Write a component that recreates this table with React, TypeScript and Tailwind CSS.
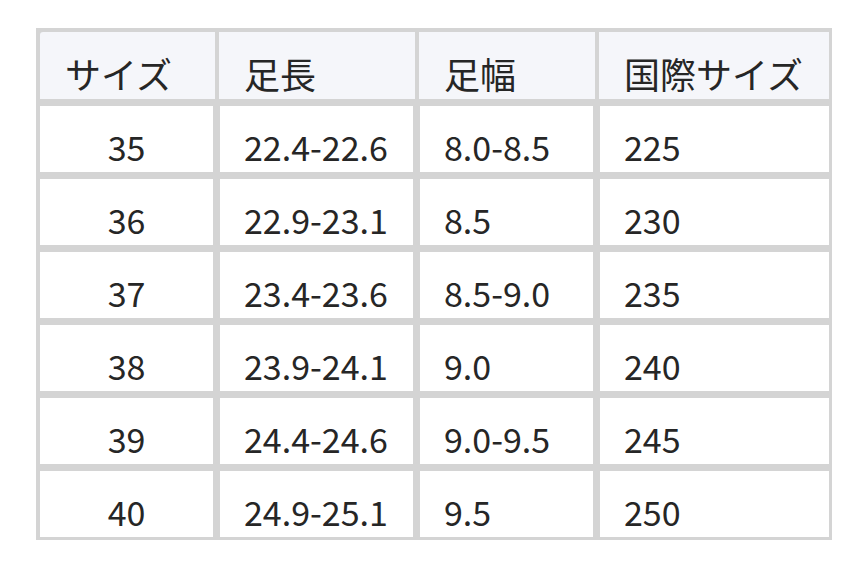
const rows = [
  ["35", "22.4-22.6", "8.0-8.5", "225"],
  ["36", "22.9-23.1", "8.5", "230"],
  ["37", "23.4-23.6", "8.5-9.0", "235"],
  ["38", "23.9-24.1", "9.0", "240"],
  ["39", "24.4-24.6", "9.0-9.5", "245"],
  ["40", "24.9-25.1", "9.5", "250"],
];

const headers = ["サイズ", "足長", "足幅", "国際サイズ"];

export default function App() {
  return (
    <div
      className="h-[568px] w-[867px] bg-white pt-[28px] pl-[36px] text-[#262626]"
      style={{ fontFamily: '"Noto Sans CJK JP", "Noto Sans", sans-serif' }}
    >
      <div className="flex w-[796px] flex-col gap-[7px] bg-[#d4d4d4] pt-[4px] pr-[3px] pb-[3px] pl-[4px]">
        <div className="grid h-[67px] grid-cols-[175px_196px_176px_230px] gap-x-[4px]">
          {headers.map((h, i) => (
            <div
              key={h}
              className={
                "flex items-center bg-[#f5f6fa] pl-[25px] pt-[14px] text-[36px] leading-none" +
                (i === 0 ? " rounded-tl-[3px]" : "")
              }
            >
              {h}
            </div>
          ))}
        </div>
        {rows.map((r) => (
          <div
            key={r[0]}
            className="grid h-[66px] grid-cols-[173px_193px_173px_229px] gap-x-[7px]"
          >
            {r.map((c, i) => (
              <div
                key={i}
                className={
                  "flex items-center bg-white pt-[16px] text-[34px] leading-none" +
                  (i === 0 ? " justify-center" : " pl-[24px]")
                }
              >
                {c}
              </div>
            ))}
          </div>
        ))}
      </div>
    </div>
  );
}
